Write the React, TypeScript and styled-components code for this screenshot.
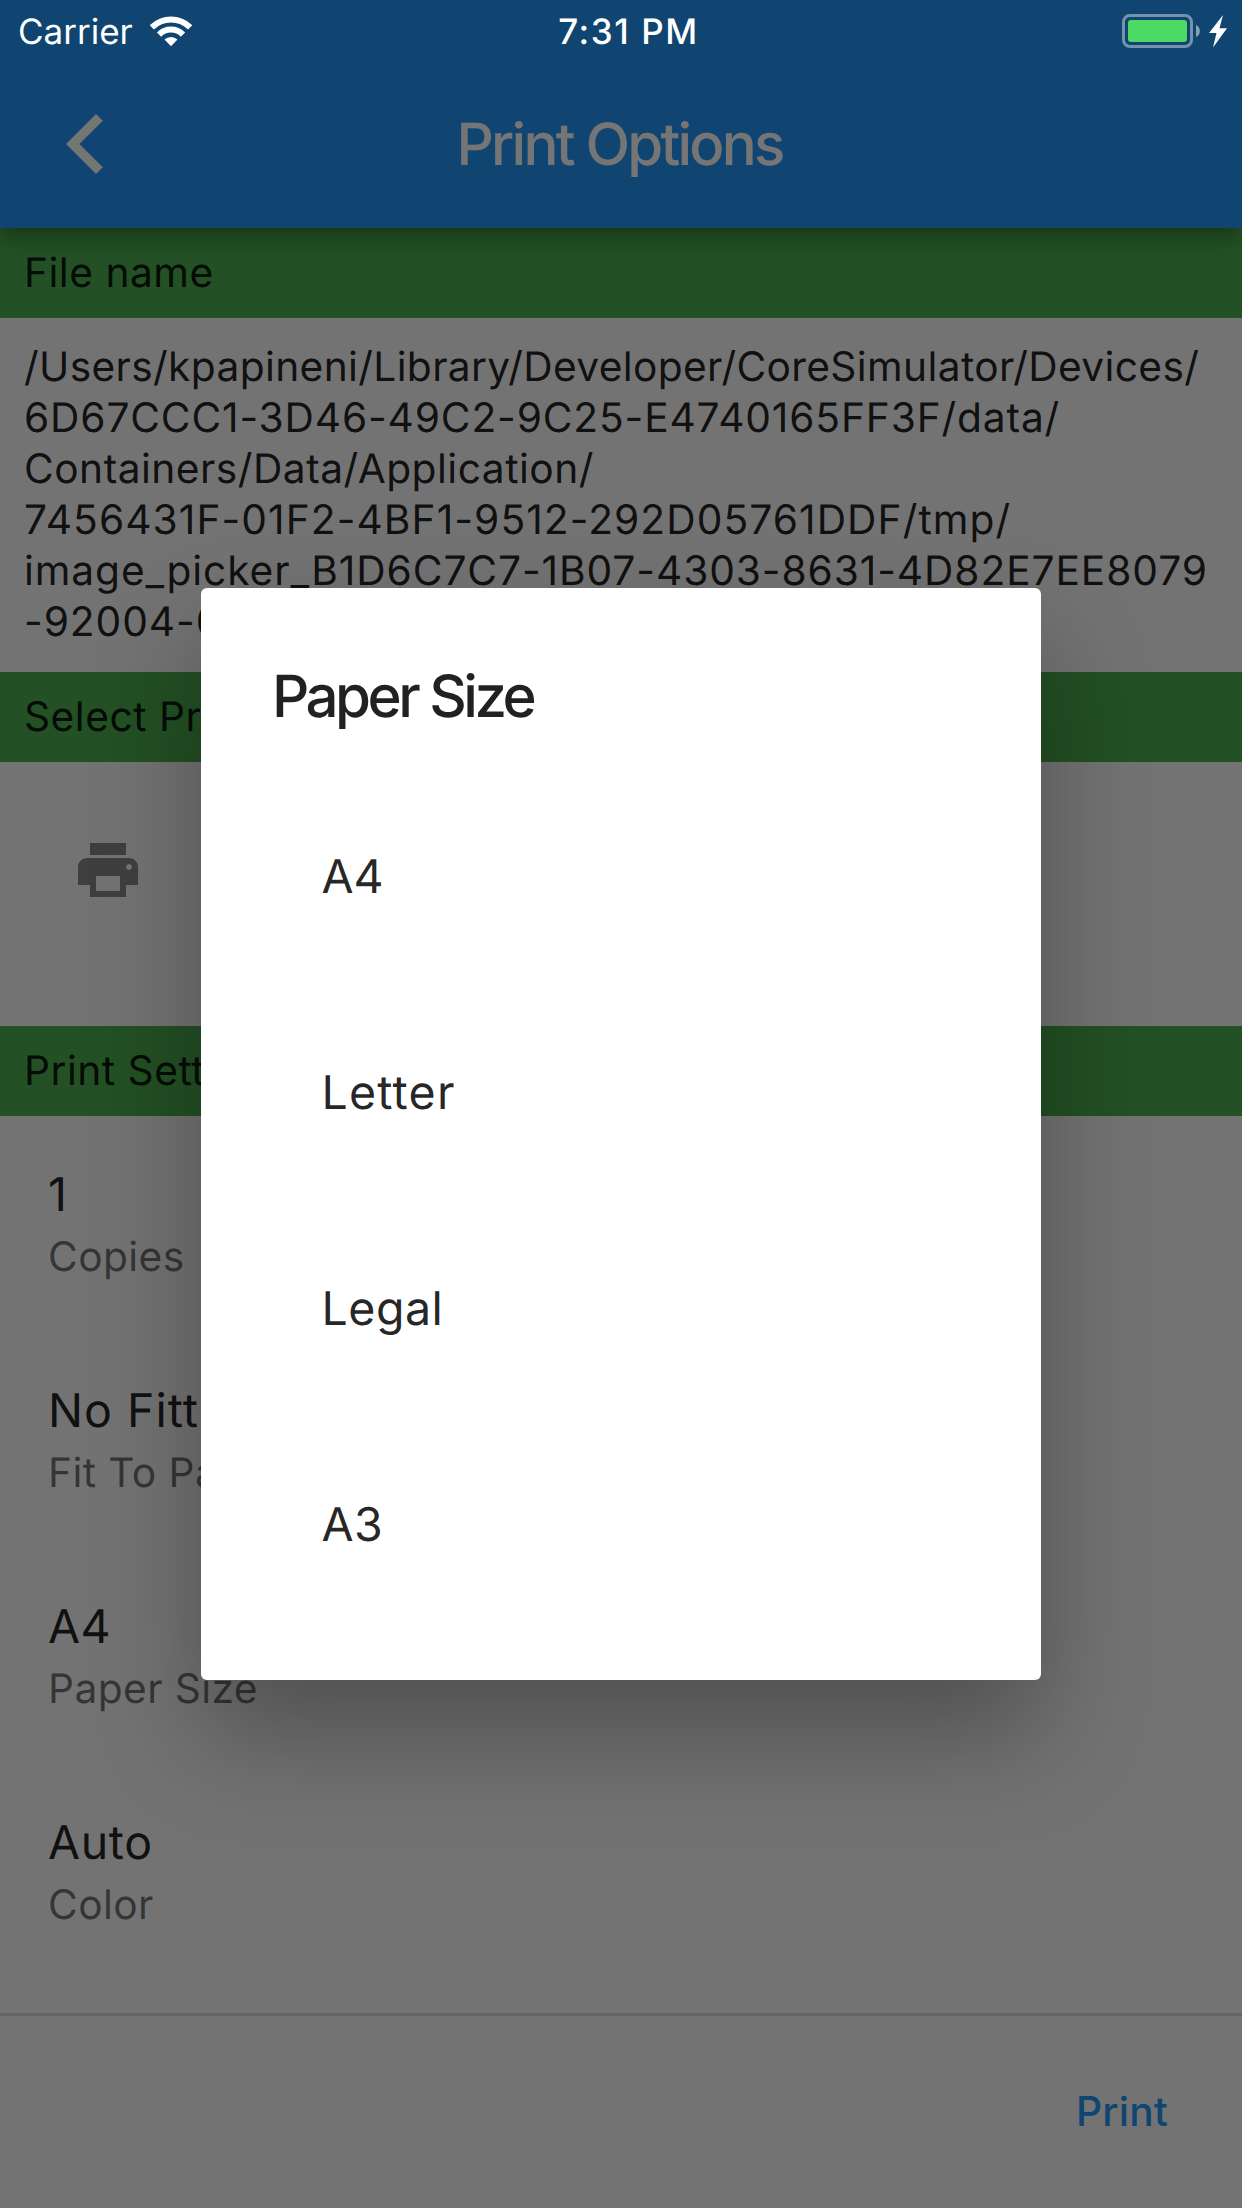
import React from 'react';
import styled, { createGlobalStyle } from 'styled-components';

const GlobalStyle = createGlobalStyle`
  *, *::before, *::after { box-sizing: border-box; }
  body {
    margin: 0;
    font-family: Inter, "Liberation Sans", sans-serif;
    text-rendering: geometricPrecision;
    color: rgba(0, 0, 0, 0.87);
  }
`;

const Screen = styled.main`
  position: relative;
  display: flex;
  flex-direction: column;
  width: 1242px;
  height: 2208px;
  overflow: hidden;
  background: #fafafa;
`;

const StatusBar = styled.div`
  position: absolute;
  z-index: 3;
  inset: 0 0 auto 0;
  display: grid;
  grid-template-columns: 1fr auto 1fr;
  align-items: center;
  height: 62px;
  padding: 0 15px 0 18px;
  color: #fff;
  font-size: 35px;
  line-height: 60px;
`;

const Carrier = styled.div`
  display: flex;
  align-items: center;
  gap: 17px;

  span { padding-top: 2px; }
`;

const Clock = styled.div`
  padding: 2px 0 0 12px;
  font-weight: 500;
  letter-spacing: 1.55px;
`;

const Battery = styled.div`
  display: flex;
  align-items: center;
  justify-content: flex-end;
`;

const AppBar = styled.header`
  position: relative;
  z-index: 1;
  display: grid;
  grid-template-columns: 168px 1fr 168px;
  align-items: center;
  flex: none;
  height: 228px;
  padding-top: 60px;
  background: #2196f3;
  box-shadow: 0 9px 18px -2px rgba(0, 0, 0, 0.28), 0 3px 26px rgba(0, 0, 0, 0.12);
`;

const BackButton = styled.button`
  display: flex;
  justify-content: center;
  padding: 0 0 0 1px;
  border: 0;
  background: none;
`;

const AppTitle = styled.h1`
  margin: 0;
  padding: 2px 3px 0 0;
  text-align: center;
  color: #fff;
  font-size: 58.2px;
  font-weight: 500;
  line-height: 166px;
  letter-spacing: -2.78px;
`;

const SectionHeader = styled.h2`
  flex: none;
  height: 90px;
  margin: 0;
  padding-left: 24px;
  background: #4caf50;
  font-size: 40.7px;
  font-weight: 400;
  line-height: 89px;
  letter-spacing: 0.5px;
`;

const FilePath = styled.div`
  flex: none;
  height: 354px;
  padding: 23px 0 0 24px;
`;

const PathLine = styled.div<{ $tracking: number }>`
  font-size: 40.7px;
  line-height: 51px;
  white-space: nowrap;
  letter-spacing: ${(p) => p.$tracking}px;
`;

const PrinterRow = styled.div`
  display: flex;
  align-items: flex-start;
  flex: none;
  height: 264px;
  padding: 72px;
`;

const SettingsList = styled.div`
  display: flex;
  flex-direction: column;
  flex: none;
  height: 897px;
`;

const Setting = styled.div`
  flex: none;
  height: 216px;
  padding: 47px 0 0 48px;
`;

const SettingValue = styled.div<{ $tracking: number }>`
  font-size: 46.5px;
  line-height: 64px;
  letter-spacing: ${(p) => p.$tracking}px;
`;

const SettingLabel = styled.div`
  margin-top: 4px;
  color: rgba(0, 0, 0, 0.54);
  font-size: 40.7px;
  line-height: 52px;
  letter-spacing: 0.42px;
`;

const Footer = styled.footer`
  display: flex;
  align-items: center;
  justify-content: flex-end;
  flex: 1;
  padding: 0 74px 0 0;
  border-top: 3px solid #dcdcdc;
`;

const PrintButton = styled.button`
  padding: 0;
  border: 0;
  background: none;
  color: #2196f3;
  font: 500 40.7px/60px Inter, sans-serif;
  letter-spacing: 0.2px;
`;

const Barrier = styled.div`
  position: absolute;
  z-index: 2;
  inset: 0;
  display: flex;
  align-items: center;
  justify-content: center;
  padding-top: 60px;
  background: rgba(0, 0, 0, 0.54);
`;

const Dialog = styled.div`
  width: 840px;
  padding: 73px 0 48px;
  border-radius: 6px;
  background: #fff;
  box-shadow: 0 56px 110px rgba(0, 0, 0, 0.3);
`;

const DialogTitle = styled.h2`
  margin: 0 0 35px;
  padding-left: 71px;
  font-size: 58.2px;
  font-weight: 500;
  line-height: 72px;
  letter-spacing: -3.5px;
`;

const Option = styled.div<{ $tracking: number }>`
  height: 216px;
  padding: 1px 0 0 120.5px;
  font-size: 46.5px;
  line-height: 216px;
  letter-spacing: ${(p) => p.$tracking}px;
`;

const pathLines = [
  { text: '/Users/kpapineni/Library/Developer/CoreSimulator/Devices/', tracking: 0.36 },
  { text: '6D67CCC1-3D46-49C2-9C25-E4740165FF3F/data/', tracking: 0.86 },
  { text: 'Containers/Data/Application/', tracking: 0.49 },
  { text: '7456431F-01F2-4BF1-9512-292D05761DDF/tmp/', tracking: 1.08 },
  { text: 'image_picker_B1D6C7C7-1B07-4303-8631-4D82E7EE8079', tracking: 0.92 },
  { text: '-92004-0', tracking: 0.94 },
];

const settings = [
  { value: '1', label: 'Copies', tracking: 0.5 },
  { value: 'No Fitting', label: 'Fit To Page', tracking: 0.99 },
  { value: 'A4', label: 'Paper Size', tracking: 0.3 },
  { value: 'Auto', label: 'Color', tracking: 0.6 },
];

const options = [
  { name: 'A4', tracking: 0 },
  { name: 'Letter', tracking: 1.21 },
  { name: 'Legal', tracking: 0.52 },
  { name: 'A3', tracking: 0.32 },
];

const WifiIcon = () => (
  <svg width="42" height="31" viewBox="0 0 42 31" fill="none" stroke="#fff">
    <path d="M1.84 11.34a27.1 27.1 0 0 1 38.32 0" strokeWidth="6" />
    <path d="M9.05 18.55a16.9 16.9 0 0 1 23.9 0" strokeWidth="6" />
    <path d="M21 30.2l-6.5-6.6a9.2 9.2 0 0 1 13 0z" fill="#fff" stroke="none" />
  </svg>
);

const BatteryIcon = () => (
  <svg width="105" height="34" viewBox="0 0 105 34">
    <rect x="1.5" y="1.5" width="68" height="31" rx="6.5" fill="none" stroke="#fff" strokeOpacity=".42" strokeWidth="3" />
    <rect x="6" y="6" width="59" height="22" rx="3" fill="#4cd964" />
    <path d="M74 11c5.200 2 5.200 10 0 12z" fill="#fff" fillOpacity=".5" />
    <path d="M101 1L87 19h7.500L91 33.500 105 14.200h-7.500z" fill="#fff" />
  </svg>
);

const BackIcon = () => (
  <svg width="37" height="60" viewBox="0 0 37 60">
    <path d="M30 0l6.800 6.800L13.400 30l23.400 23.200L30 60 0 30z" fill="#fff" />
  </svg>
);

const PrinterIcon = () => (
  <svg width="72" height="72" viewBox="0 0 24 24" fill="rgba(0,0,0,0.45)">
    <path d="M19 8H5c-1.660 0-3 1.340-3 3v6h4v4h12v-4h4v-6c0-1.660-1.340-3-3-3zm-3 11H8v-5h8v5zm3-7c-.55 0-1-.45-1-1s.45-1 1-1 1 .45 1 1-.45 1-1 1zm-1-9H6v4h12V3z" />
  </svg>
);

export default function App() {
  return (
    <>
      <GlobalStyle />
      <Screen>
        <AppBar>
          <BackButton aria-label="Back">
            <BackIcon />
          </BackButton>
          <AppTitle>Print Options</AppTitle>
        </AppBar>

        <SectionHeader>File name</SectionHeader>
        <FilePath>
          {pathLines.map((line) => (
            <PathLine key={line.text} $tracking={line.tracking}>{line.text}</PathLine>
          ))}
        </FilePath>

        <SectionHeader>Select Printer</SectionHeader>
        <PrinterRow>
          <PrinterIcon />
        </PrinterRow>

        <SectionHeader>Print Settings</SectionHeader>
        <SettingsList>
          {settings.map((s) => (
            <Setting key={s.label}>
              <SettingValue $tracking={s.tracking}>{s.value}</SettingValue>
              <SettingLabel>{s.label}</SettingLabel>
            </Setting>
          ))}
        </SettingsList>

        <Footer>
          <PrintButton>Print</PrintButton>
        </Footer>

        <Barrier>
          <Dialog role="dialog" aria-label="Paper Size">
            <DialogTitle>Paper Size</DialogTitle>
            {options.map((o) => (
              <Option key={o.name} $tracking={o.tracking}>{o.name}</Option>
            ))}
          </Dialog>
        </Barrier>

        <StatusBar>
          <Carrier>
            <span>Carrier</span>
            <WifiIcon />
          </Carrier>
          <Clock>7:31 PM</Clock>
          <Battery>
            <BatteryIcon />
          </Battery>
        </StatusBar>
      </Screen>
    </>
  );
}
